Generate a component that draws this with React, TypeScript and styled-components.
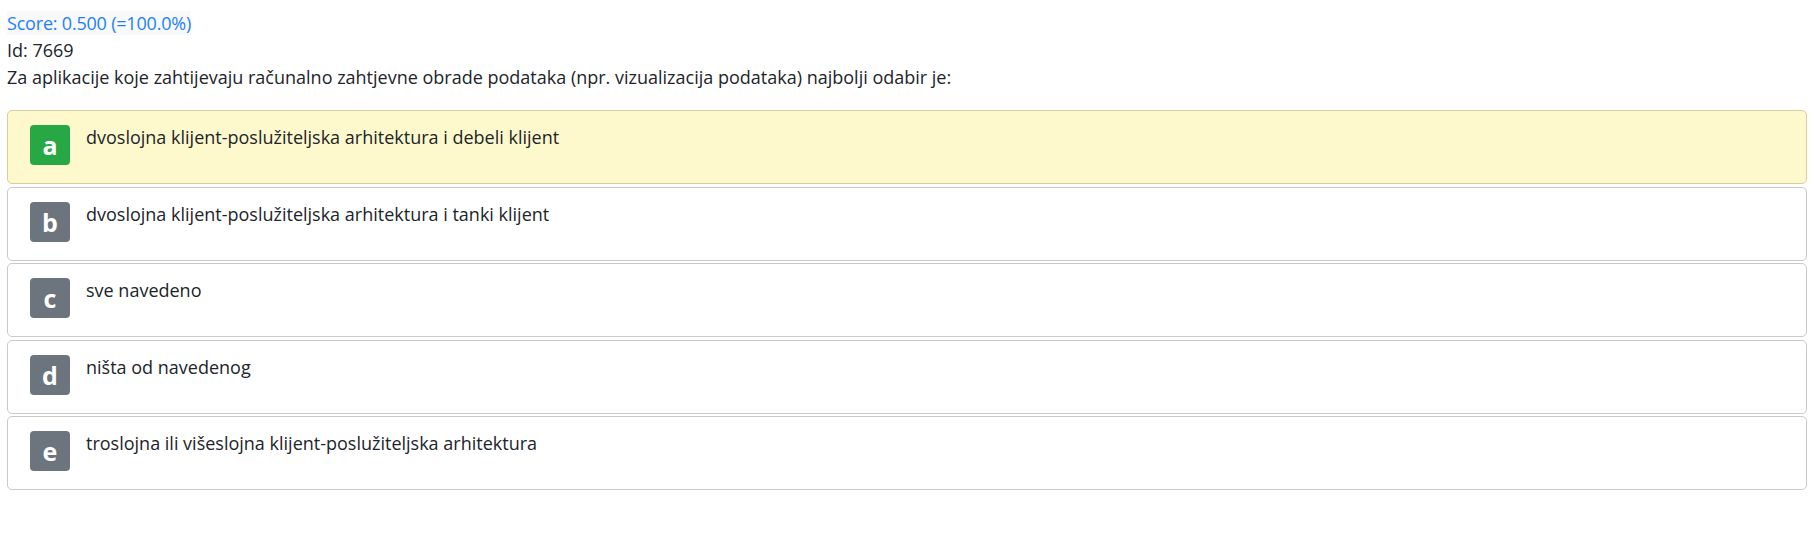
import React from "react";
import styled, { createGlobalStyle } from "styled-components";

const GlobalStyle = createGlobalStyle`
  html, body {
    margin: 0;
    padding: 0;
    background: #ffffff;
  }
  body {
    font-family: "Open Sans", "Noto Sans", sans-serif;
    font-size: 18px;
    line-height: 27px;
    color: #212529;
  }
`;

const Page = styled.div`
  padding: 10px 9px 0 7px;
`;

const Line = styled.div`
  line-height: 27px;
`;

const Score = styled.span`
  color: #1f80f8;
  background: #f8f9fa;
  letter-spacing: -0.2px;
`;

const Answers = styled.div`
  margin-top: 19px;
  display: flex;
  flex-direction: column;
  gap: 2.5px;
`;

const Card = styled.div<{ $correct?: boolean }>`
  display: flex;
  align-items: flex-start;
  gap: 16px;
  height: 74px;
  box-sizing: border-box;
  padding: 13px 20px 0 22px;
  border: 1px solid ${(p) => (p.$correct ? "#d5ce9f" : "#c9c9c9")};
  border-radius: 5px;
  background: ${(p) => (p.$correct ? "#fef9cd" : "#ffffff")};
`;

const Badge = styled.div<{ $correct?: boolean }>`
  flex: none;
  width: 40px;
  height: 40px;
  border-radius: 4px;
  background: ${(p) => (p.$correct ? "#28a745" : "#6c757d")};
  color: #ffffff;
  font-weight: 700;
  font-size: 25px;
  line-height: 40px;
  text-align: center;
  margin-top: 1px;
`;

const AnswerText = styled.div`
  line-height: 27px;
`;

const answers = [
  { letter: "a", text: "dvoslojna klijent-poslužiteljska arhitektura i debeli klijent", correct: true },
  { letter: "b", text: "dvoslojna klijent-poslužiteljska arhitektura i tanki klijent" },
  { letter: "c", text: "sve navedeno" },
  { letter: "d", text: "ništa od navedenog" },
  { letter: "e", text: "troslojna ili višeslojna klijent-poslužiteljska arhitektura" },
];

export default function App() {
  return (
    <>
      <GlobalStyle />
      <Page>
        <Line>
          <Score>Score: 0.500 (=100.0%)</Score>
        </Line>
        <Line>Id: 7669</Line>
        <Line>
          Za aplikacije koje zahtijevaju računalno zahtjevne obrade podataka (npr. vizualizacija podataka) najbolji odabir je:
        </Line>
        <Answers>
          {answers.map((a) => (
            <Card key={a.letter} $correct={a.correct}>
              <Badge $correct={a.correct}>{a.letter}</Badge>
              <AnswerText>{a.text}</AnswerText>
            </Card>
          ))}
        </Answers>
      </Page>
    </>
  );
}
